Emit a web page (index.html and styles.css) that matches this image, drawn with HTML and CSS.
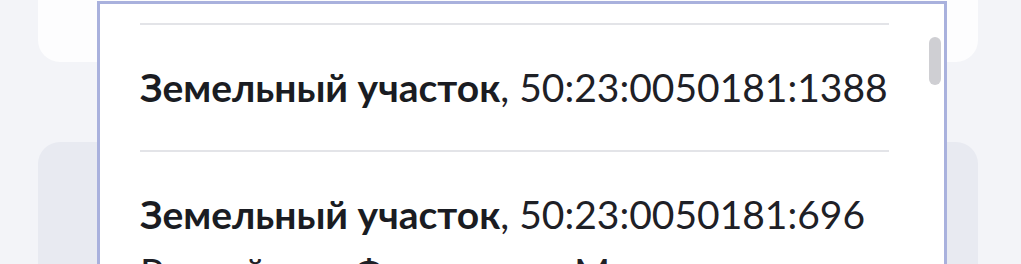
FILE: index.html
```html
<!DOCTYPE html>
<html lang="ru">
<head>
    <meta charset="UTF-8">
    <meta name="viewport" content="width=device-width, initial-scale=1.0">
    <title>Поиск объекта</title>
    <link rel="stylesheet" href="styles.css">
</head>
<body>
    <div class="page">
        <div class="card card-top"></div>
        <div class="card card-bottom"></div>

        <div class="dropdown">
            <div class="list">
                <div class="item">
                    <div class="title"><b>Земельный участок</b>, 50:23:0050181:1388</div>
                </div>
                <div class="item">
                    <div class="title"><b>Земельный участок</b>, 50:23:0050181:696</div>
                    <div class="address">Российская Федерация, Московская область, Раменский городской округ</div>
                </div>
            </div>
            <div class="scrollbar"><div class="thumb"></div></div>
        </div>
    </div>
</body>
</html>
```

FILE: styles.css
```css
/* General Styles */
body {
    margin: 0;
    background: #f3f4f8;
    font-family: 'Lato', 'Open Sans', sans-serif;
    color: #1e2026;
    overflow: hidden;
}

.page {
    position: relative;
    height: 264px;
    padding: 0 43px 0 38px;
}

.card {
    border-radius: 0 0 22px 22px;
}

.card-top {
    height: 62px;
    background: #fdfdfe;
}

.card-bottom {
    margin-top: 80px;
    height: 150px;
    background: #e8eaf1;
    border-radius: 22px 22px 0 0;
}

/* Dropdown overlay */
.dropdown {
    position: absolute;
    top: 1px;
    left: 97px;
    width: 844px;
    height: 320px;
    background: #fff;
    border: 3px solid #a9b1dd;
    border-bottom: none;
    display: flex;
    overflow: hidden;
}

.list {
    flex: 1;
    min-width: 0;
    padding: 19px 55px 0 40px;
}

.item {
    border-top: 2px solid #e3e4e8;
    padding: 37px 0 37px;
    font-size: 39px;
    line-height: 51px;
}

.title {
    white-space: nowrap;
}

.item b {
    font-weight: 700;
    color: #1a1c22;
}

.address {
    margin-top: 7px;
    color: #1e2026;
}

.scrollbar {
    position: absolute;
    top: 33px;
    right: 3px;
    width: 12px;
}

.thumb {
    height: 48px;
    border-radius: 6px;
    background: #cfcfd3;
}
```
